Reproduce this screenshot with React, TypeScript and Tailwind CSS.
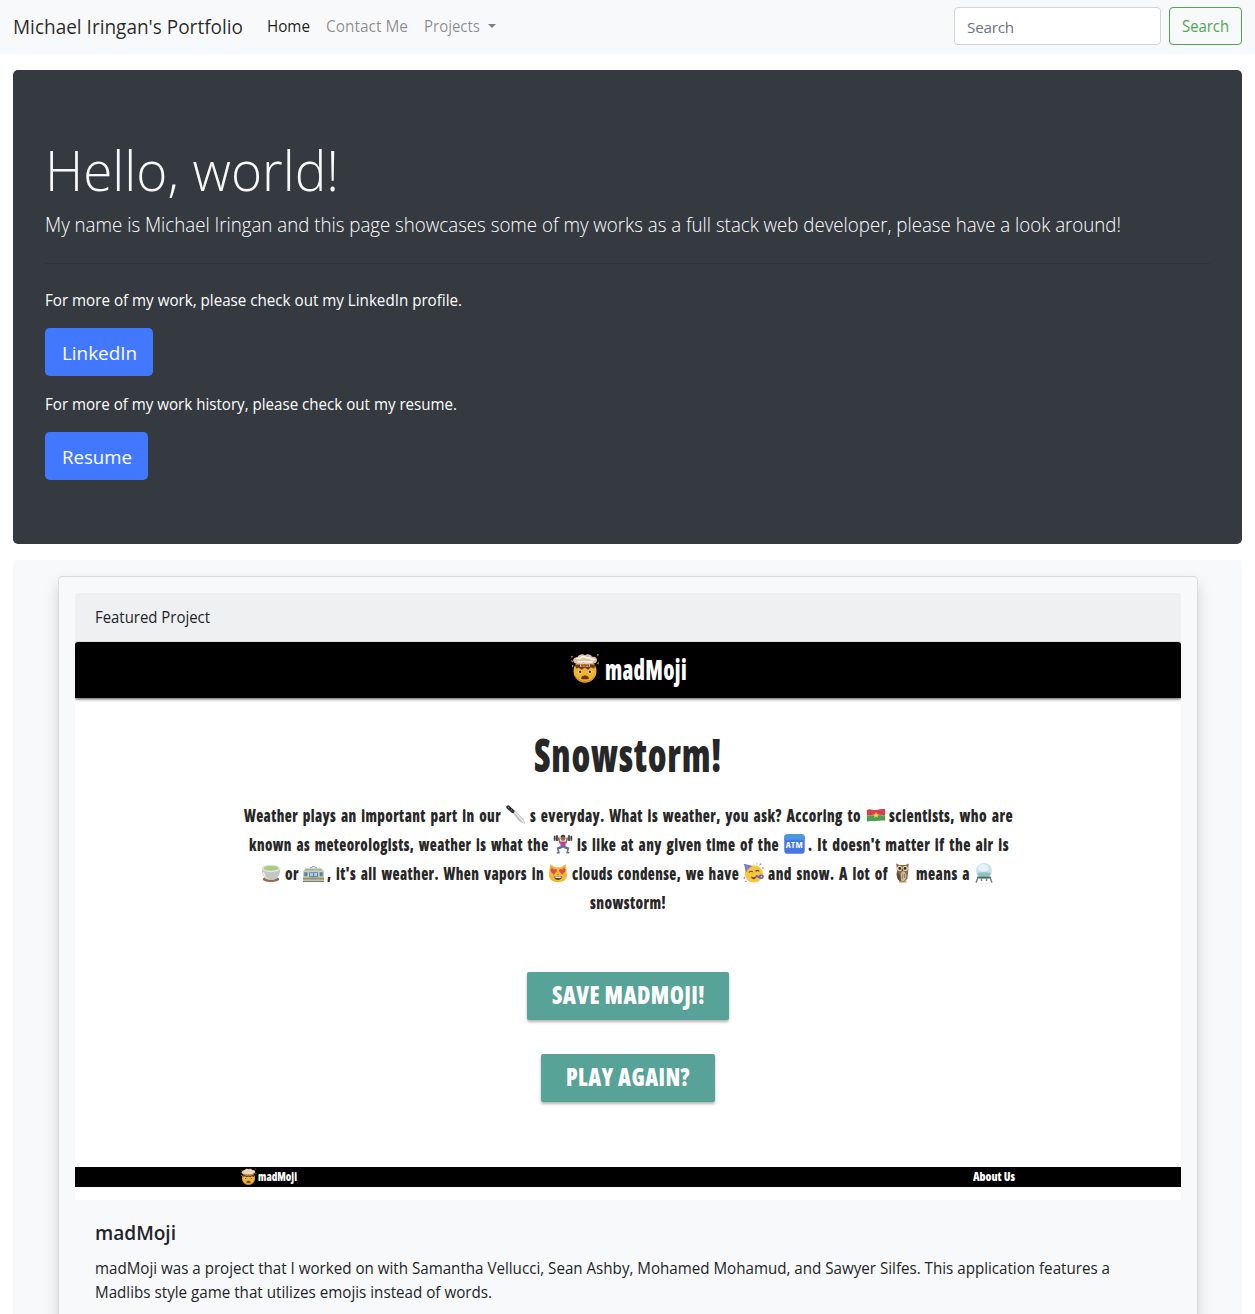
import { useLayoutEffect, useRef } from "react";
import type { ReactNode } from "react";

/** A single line of text condensed or expanded to a set width. */
function Fit({ w, className = "", children }: { w: number; className?: string; children: ReactNode }) {
  const ref = useRef<HTMLSpanElement>(null);
  useLayoutEffect(() => {
    const el = ref.current;
    if (!el) return;
    el.style.transform = "none";
    el.style.transform = `scaleX(${w / el.getBoundingClientRect().width})`;
  }, [w, children]);
  return (
    <span className={`block shrink-0 whitespace-nowrap ${className}`} style={{ width: w }}>
      <span ref={ref} className="inline-block origin-left">
        {children}
      </span>
    </span>
  );
}

function MindBlown({ className }: { className: string }) {
  return (
    <svg viewBox="0 0 28 28" className={className}>
      <circle cx="14" cy="17" r="10.7" fill="#f0b32e" />
      <path d="M3.400 18a10.700 10.700 0 0 0 21.200 0c-2 5-5 8-10.600 8S5 22.500 3.400 18z" fill="#d08a1c" />
      <path d="M4.500 11.500c2-1.500 16-2 19 0l-1 3.300-3-1.400-2.500 2.200-3-1.800-3.500 1.800-2.500-2-2 1.200z" fill="#6b3a20" />
      <path d="M3 7.500C2.500 4.500 6 3.500 7 4c1-3 5-3.400 7-2 2-1.600 6-.8 6.500 1.600 3-.6 5.500 1.400 4.500 4-1 2.500-4 2.400-6 2.200l-.5 3h-9l-.5-3C6 10.500 3.500 10 3 7.500z" fill="#dfc3aa" />
      <path d="M6 5.500c2-1.500 3 .5 4-.8s3-2 4.500-.5 3-.8 4.500.8 3 .3 4 1.600M7 8c3 1.200 4-.5 6 0s5 .6 8-.2" fill="none" stroke="#fff5e8" strokeWidth="1.500" />
      <path d="M10 10.500l1 3.500 2-2.500 1 3 2-3 1.500 2.500.5-3.500z" fill="#a25a35" />
      <path d="M.8 2.500l2 .6-1 1.500zM1 6.500l2 1-1 1.500zM25 1l2 .5-1 1.500zM25 9.500l2-1-.5 2.500zM1.500 11l2 1-1.200 1.500z" fill="#e8a51c" />
      <circle cx="9.500" cy="17.500" r="1.900" fill="#f8dfa0" />
      <circle cx="18.500" cy="17.500" r="1.900" fill="#f8dfa0" />
      <circle cx="9.500" cy="17.500" r="1.100" fill="#4a2b10" />
      <circle cx="18.500" cy="17.500" r="1.100" fill="#4a2b10" />
      <path d="M10.300 24c.2-4 7.200-4 7.400 0-1.500.8-6 .8-7.400 0z" fill="#6d3413" />
    </svg>
  );
}

const emoji: Record<string, ReactNode> = {
  knife: (
    <>
      <path d="M7 8.500L10 5.500l11 11.500c1.200 1.500 1.600 3 1.800 5.500-4-1-6.500-2.500-8.800-5.500z" fill="#bfc2c3" />
      <path d="M9.500 7l12 14" stroke="#eff0f0" strokeWidth="1.500" />
      <path d="M2.500 2.500L8 7.500" stroke="#2e2e30" strokeWidth="4.400" strokeLinecap="round" />
      <circle cx="3" cy="2.700" r=".6" fill="#bbb" />
      <circle cx="6.500" cy="5.800" r=".6" fill="#bbb" />
    </>
  ),
  flag: (
    <>
      <path d="M1 6c4-2.500 7 .5 11 0s7-1.500 11-1v7.500H1z" fill="#d8414c" />
      <path d="M1 12.500h22V19c-4-1-7 0-11 .3s-7-.8-11 .7z" fill="#4f9d50" />
      <path d="M12 8.500l1.100 2.600h2.700l-2.200 1.700.9 2.700-2.500-1.600-2.500 1.600.9-2.700-2.200-1.700h2.700z" fill="#f6d341" />
    </>
  ),
  lifter: (
    <>
      <path d="M1.500 5h21" stroke="#8b9197" strokeWidth="1" />
      <path d="M2 2v6M4.800 1.500v7M19.200 1.500v7M22 2v6" stroke="#42484f" strokeWidth="2.200" />
      <path d="M6.500 4.500l2 6h7l2-6" fill="none" stroke="#9c6a4e" strokeWidth="2" />
      <circle cx="12" cy="5.500" r="2.900" fill="#9c6a4e" />
      <path d="M9 4c.3-4 5.700-4 6 0-2-1-4-1-6 0z" fill="#4a342b" />
      <path d="M8.500 9h7l-.8 7.500H9.300z" fill="#b5489a" />
      <path d="M9 15.500L5.500 17l1.500 5M15 15.500l3.500 1.500-1.500 5" fill="none" stroke="#9c6a4e" strokeWidth="2" />
      <path d="M11 15.500L6 17.500M13 15.500l5 2" stroke="#3180aa" strokeWidth="2.600" />
      <path d="M4.500 22.500H8M16 22.500h3.500" stroke="#397fa5" strokeWidth="1.700" />
    </>
  ),
  atm: (
    <>
      <rect x=".3" y=".3" width="23.400" height="23.400" rx="4" fill="#4575e2" />
      <path d="M.3 7V4.300a4 4 0 0 1 4-4h15.400a4 4 0 0 1 4 4V7z" fill="#4a9adb" />
      <text x="12" y="16.500" textAnchor="middle" textLength="20" lengthAdjust="spacingAndGlyphs" fontSize="11.500" fontWeight="700" fill="#fff" fontFamily="Open Sans, sans-serif">
        ATM
      </text>
    </>
  ),
  cup: (
    <>
      <ellipse cx="12" cy="19.500" rx="10" ry="3.400" fill="#98694d" />
      <path d="M1 6.500c0 10 4.200 14 11 14s11-4 11-14z" fill="#c4c6c5" />
      <path d="M4 11c1 5 3 7.500 7 8-5 0-8-3-9-8z" fill="#edeeed" />
      <ellipse cx="12" cy="6.500" rx="11" ry="4.500" fill="#e3e5e1" />
      <ellipse cx="12" cy="6.300" rx="9" ry="3" fill="#a7cd80" />
    </>
  ),
  tram: (
    <>
      <path d="M8 6l4-2 4 2" fill="none" stroke="#777" strokeWidth="1" />
      <path d="M3 6.500h18l2 3H1z" fill="#9db2ae" />
      <rect x="0" y="9" width="24" height="12" rx="1" fill="#d6cda6" />
      <path d="M0 17.500h24V20H0z" fill="#9a9670" />
      <path d="M1.500 11H5v5H1.500zM7 11h10v6H7zM19 11h3.500v5H19z" fill="#4b83ad" />
      <path d="M8 12h3.500v4H8zM12.500 12H16v4h-3.500z" fill="#a9cbe4" />
      <path d="M0 22h24" stroke="#77766b" strokeWidth="1.500" />
    </>
  ),
  cat: (
    <>
      <path d="M2.500 1.500l6 3.500h7l6-3.500 1.300 13c0 6-5.300 8.500-10.800 8.500S1.200 20.500 1.200 14.500z" fill="#f0b937" />
      <path d="M3.800 4.500l3 2-2.800 3zM20.200 4.500l-3 2 2.800 3z" fill="#d98b62" />
      <path d="M7 16.500c2-1.200 8-1.200 10 0-.5 5-9.500 5-10 0z" fill="#6c3b20" />
      <path d="M7.600 16.800c2-.7 6.800-.7 8.800 0-1 1.500-7.800 1.500-8.800 0z" fill="#fff" />
      <path d="M6.800 14L3 9.500C2 7 5.500 5.500 7 8c2-2 4.500 0 3.600 2zM17.200 14L21 9.500C22 7 18.500 5.500 17 8c-2-2-4.500 0-3.600 2z" fill="#e04a4a" />
      <path d="M11 13.500h2l-1 1.400z" fill="#bd5146" />
    </>
  ),
  party: (
    <>
      <circle cx="12.500" cy="13" r="10.300" fill="#f6c63e" />
      <path d="M1 1l10 2.500c-3 1-6 4-7.500 7.500z" fill="#8a6fc0" />
      <path d="M3 3l3 4" stroke="#64a6cf" strokeWidth="1.300" />
      <path d="M7 11.500c1-2 3-2 4-.5M14.500 10c1-1.500 3-1.500 4 0" fill="none" stroke="#74451a" strokeWidth="1.400" />
      <path d="M9 16c2 1.500 4 1.500 6 .2-.5 4.500-5 4.500-6-.2z" fill="#80401b" />
      <path d="M14.500 15.500l5 1.500" stroke="#715fc1" strokeWidth="2.600" />
      <circle cx="21" cy="16.500" r="2" fill="none" stroke="#5d58ba" strokeWidth="1.600" />
      <path d="M19 2l2-1M22 6h1.500M2 17l-1 2M4 22H2.500M16 1.500V.500" stroke="#d36a9d" strokeWidth="1.600" />
    </>
  ),
  owl: (
    <>
      <path d="M5 .5l4 2h7l4-2-.5 8.500-1 10-3.500 3.500H10c-4-3-5-9-4-13.500z" fill="#86694d" />
      <path d="M12 10c4 0 5.500 3 5 7s-3.500 5-5 5-3-8 0-12z" fill="#cdb999" />
      <path d="M6 11c-1 4 0 8 4 11 1-4 .5-8-4-11z" fill="#5d4938" />
      <circle cx="9.200" cy="6.500" r="3.200" fill="#e1cfab" />
      <circle cx="15.900" cy="6.500" r="3.200" fill="#e1cfab" />
      <circle cx="9.400" cy="6.500" r="1.600" fill="#352719" />
      <circle cx="15.700" cy="6.500" r="1.600" fill="#352719" />
      <path d="M11.300 7.500h2.500l-1.200 3z" fill="#4e4b42" />
      <path d="M12.500 13v6M15 13v5" stroke="#8e7152" strokeWidth="1" />
      <path d="M8.500 22.700h9" stroke="#b3884d" strokeWidth="1.400" />
    </>
  ),
  crystal: (
    <>
      <circle cx="12" cy="9.500" r="9.500" fill="#c9dfee" />
      <path d="M3.500 12.500c4-2 12-2 17 0-1.500 4.500-4.500 6-8.500 6s-7.500-2-8.500-6z" fill="#8ac6bf" />
      <ellipse cx="11" cy="6" rx="6.500" ry="4.400" fill="#e6f1f9" />
      <path d="M3.500 17.500h17" stroke="#5d6468" strokeWidth="2.200" />
      <path d="M4.500 18l-2 5.500M9 18.500v3M15 18.500v3M19.500 18l2 5.500" stroke="#777d80" strokeWidth="1.800" />
    </>
  ),
};

type Piece = { gap: number; w: number; text?: string; icon?: string };

const story: Piece[][] = [
  [
    { gap: 169, w: 257, text: "Weather plays an important part in our" },
    { gap: 5, w: 20, icon: "knife" },
    { gap: 4, w: 331, text: "s everyday. What is weather, you ask? Accoring to" },
    { gap: 5, w: 20, icon: "flag" },
    { gap: 3, w: 124, text: "scientists, who are" },
  ],
  [
    { gap: 173.5, w: 299.5, text: "known as meteorologists, weather is what the" },
    { gap: 5, w: 20, icon: "lifter" },
    { gap: 4, w: 202, text: "is like at any given time of the" },
    { gap: 5, w: 21, icon: "atm" },
    { gap: 3, w: 201, text: ". It doesn't matter if the air is" },
  ],
  [
    { gap: 186, w: 20, icon: "cup" },
    { gap: 4, w: 14, text: "or" },
    { gap: 4, w: 21, icon: "tram" },
    { gap: 3, w: 217, text: ", it's all weather. When vapors in" },
    { gap: 4, w: 20, icon: "cat" },
    { gap: 4, w: 167, text: "clouds condense, we have" },
    { gap: 4, w: 21, icon: "party" },
    { gap: 4, w: 120, text: "and snow. A lot of" },
    { gap: 3.5, w: 20, icon: "owl" },
    { gap: 4.5, w: 54, text: "means a" },
    { gap: 4, w: 20, icon: "crystal" },
  ],
  [{ gap: 515, w: 76, text: "snowstorm!" }],
];

function MadMojiPreview() {
  return (
    <div className="flex h-[558px] flex-col overflow-hidden rounded-t-[3px] bg-white font-extrabold text-[#272727] [font-stretch:75%]">
      <div className="flex h-[56px] shrink-0 items-center bg-black pl-[494.5px] text-white shadow-[0_1px_3px_rgba(0,0,0,0.7)]">
        <MindBlown className="mb-1 size-[30px] shrink-0" />
        <Fit w={82} className="ml-[5px] text-[27.5px] leading-[58px] tracking-[0.4px]">madMoji</Fit>
      </div>
      <h2 className="mt-[25px] flex h-16 justify-center text-[46px] leading-[63px]">
        <Fit w={188} className="tracking-[1px]">Snowstorm!</Fit>
      </h2>
      <div className="mt-[14px]">
        {story.map((line, i) => (
          <div key={i} className="flex h-[29px] items-center text-[17.5px] leading-[29px] font-extrabold tracking-[0.5px] [word-spacing:2px]">
            {line.map((p, j) => (
              <div key={j} className="shrink-0" style={{ marginLeft: p.gap, width: p.w }}>
                {p.text ? (
                  <Fit w={p.w}>{p.text}</Fit>
                ) : (
                  <svg viewBox="0 0 24 24" preserveAspectRatio="none" className="mb-[2px] block h-[20px] w-full">
                    {emoji[p.icon as string]}
                  </svg>
                )}
              </div>
            ))}
          </div>
        ))}
      </div>
      <div className="mt-[54.5px] flex flex-col items-center gap-[34.500px] text-[25px] leading-[45px] text-white [word-spacing:2px]">
        <button className="flex h-[48px] w-[202px] justify-center rounded-[2px] bg-[#58a398] shadow-[0_2px_3px_rgba(0,0,0,0.3)]">
          <Fit w={153} className="tracking-[0.5px]">SAVE MADMOJI!</Fit>
        </button>
        <button className="flex h-[48px] w-[174px] justify-center rounded-[2px] bg-[#58a398] shadow-[0_2px_3px_rgba(0,0,0,0.3)]">
          <Fit w={124} className="tracking-[0.5px]">PLAY AGAIN?</Fit>
        </button>
      </div>
      <div className="mt-auto mb-[13px] flex h-[20px] shrink-0 items-center bg-black pl-[165px] text-[12.5px] leading-[22px] text-white">
        <MindBlown className="mb-[2px] size-[17px] shrink-0" />
        <Fit w={39} className="ml-px">madMoji</Fit>
        <Fit w={42} className="ml-[676px]">About Us</Fit>
      </div>
    </div>
  );
}

export default function App() {
  return (
    <div className="h-[1314px] overflow-hidden bg-white font-['Open_Sans',sans-serif] text-[15.5px] leading-6 text-[#212529]">
      <nav className="flex h-[54px] items-center bg-[#f8f9fb] px-[13px] pb-[2px]">
        <Fit w={230} className="mt-[2px] text-[19.5px] leading-[30px] text-black/85">Michael Iringan's Portfolio</Fit>
        <Fit w={43} className="ml-6 text-black/90">Home</Fit>
        <Fit w={82} className="ml-4 text-black/45">Contact Me</Fit>
        <Fit w={56} className="ml-4 text-black/45">Projects</Fit>
        <span className="mb-px ml-2 border-x-[4.800px] border-t-[4.800px] border-x-transparent border-t-black/50" />
        <input
          placeholder="Search"
          className="ml-auto h-[38px] w-[207px] rounded-[4px] border border-[#ced4da] bg-white px-3 pt-[2px] text-[15.2px] tracking-[-0.2px] placeholder:text-[#6c757d]"
        />
        <button className="ml-2 flex h-[38px] w-[73px] items-center justify-center rounded-[4px] border border-[#4fa64c] text-[#4fa64c]">
          <Fit w={47}>Search</Fit>
        </button>
      </nav>

      <header className="mx-[13px] mt-4 h-[474px] rounded-[5px] bg-[#353a41] px-8 pt-[64px] text-[#f8f9fa]">
        <h1 className="flex h-[67px]">
          <Fit w={294} className="text-[55px] leading-[71px] font-light">Hello, world!</Fit>
        </h1>
        <Fit w={1076} className="mt-2 text-[19.5px] leading-[32px] font-light text-white">
          My name is Michael Iringan and this page showcases some of my works as a full stack web developer, please have a look around!
        </Fit>
        <hr className="mt-[22px] border-0 border-t border-[#303439]" />
        <Fit w={417} className="mt-6 text-white">For more of my work, please check out my LinkedIn profile.</Fit>
        <button className="mt-4 flex h-12 w-[108px] items-center justify-center rounded-[4.8px] bg-[#4178ff] pt-[2px] text-[19px] text-white">
          <Fit w={75}>LinkedIn</Fit>
        </button>
        <Fit w={412} className="mt-4 text-white">For more of my work history, please check out my resume.</Fit>
        <button className="mt-4 flex h-12 w-[103px] items-center justify-center rounded-[4.8px] bg-[#4178ff] pt-[2px] text-[19px] text-white">
          <Fit w={70}>Resume</Fit>
        </button>
      </header>

      <main className="mx-[13px] mt-4 h-[800px] rounded-[4px] bg-[#f8f9fb] px-[45px] pt-4">
        <article className="h-[820px] w-[1140px] rounded-[4px] border border-[#d9dbdd] bg-[#f8f9fb] p-4 shadow-[0_8px_16px_rgba(0,0,0,0.15)]">
          <div className="flex h-[49px] items-center rounded-t-[3px] border-b border-[#dcddde] bg-[#eff0f2] px-5">
            <Fit w={115}>Featured Project</Fit>
          </div>
          <MadMojiPreview />
          <div className="p-5">
            <h5 className="flex text-[19.5px] leading-6 font-semibold">
              <Fit w={81} className="mt-px">madMoji</Fit>
            </h5>
            <div className="mt-[11px]">
              <Fit w={1015}>
                madMoji was a project that I worked on with Samantha Vellucci, Sean Ashby, Mohamed Mohamud, and Sawyer Silfes. This application features a
              </Fit>
              <Fit w={397}>Madlibs style game that utilizes emojis instead of words.</Fit>
            </div>
          </div>
        </article>
      </main>
    </div>
  );
}
